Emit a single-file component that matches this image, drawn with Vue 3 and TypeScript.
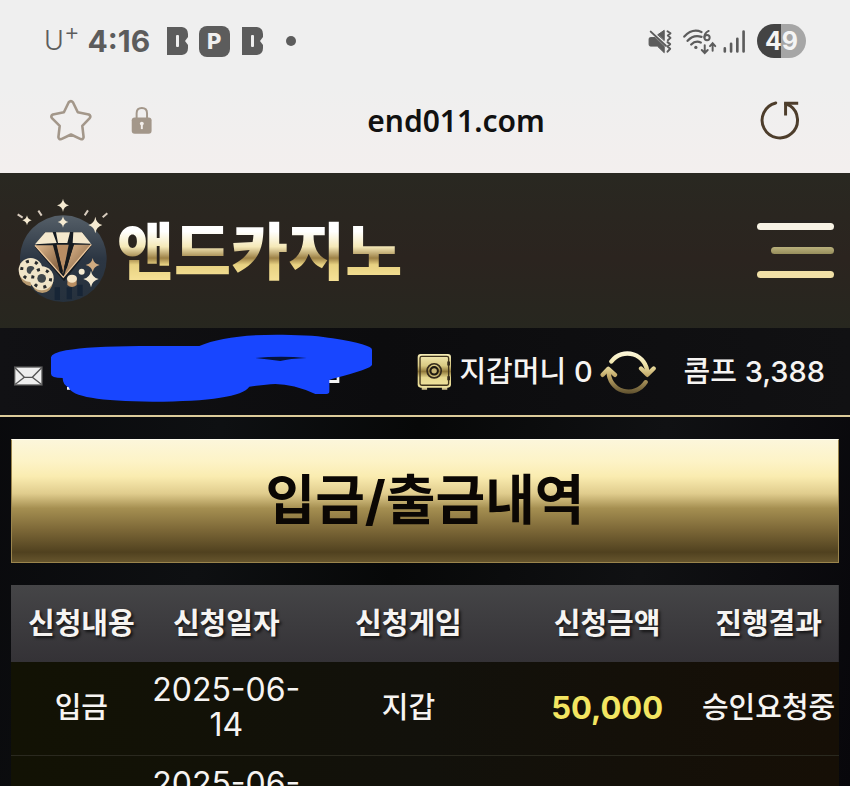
<script setup lang="ts">
interface HistoryRow {
  kind: string
  date: string
  game: string
  amount: string
  result: string
}

const columns: string[] = ['신청내용', '신청일자', '신청게임', '신청금액', '진행결과']

const rows: HistoryRow[] = [
  { kind: '입금', date: '2025-06-14', game: '지갑', amount: '50,000', result: '승인요청중' },
  { kind: '', date: '2025-06-', game: '', amount: '', result: '' },
]
</script>

<template>
  <div class="screen">
    <div class="browser">
      <div class="status">
        <div class="status-left">
          <span class="carrier">U<sup>+</sup></span>
          <span class="clock">4:16</span>
          <svg class="notes" viewBox="0 0 134 34" aria-hidden="true">
            <g fill="#5c5c5c">
              <path d="M1 3H16Q22 4 22 10V13L19 17L22 21V24Q22 30 16 31H1Z" />
              <rect x="33" y="2" width="31" height="31" rx="8" />
              <path d="M76 3H91Q97 4 97 10V13L94 17L97 21V24Q97 30 91 31H76Z" />
              <circle cx="125" cy="17" r="5" />
            </g>
            <rect x="10" y="11" width="3" height="12" rx="1" fill="#efefef" />
            <rect x="85" y="11" width="3" height="12" rx="1" fill="#efefef" />
            <text class="badge-p" x="41" y="25">P</text>
          </svg>
        </div>
        <div class="status-right">
          <svg class="signals" viewBox="50 50 302 82" fill="none" stroke="#5c5c5c" stroke-width="7" stroke-linecap="round" aria-hidden="true">
            <path d="M57 83q0-4 4-4h14l28 27v19l-21-20H61q-4 0-4-4zM84 70l19-13v30z" fill="#5c5c5c" stroke="#5c5c5c" stroke-width="3" />
            <path d="M62 61l46 43" stroke-width="6" />
            <path d="M113 60l9 6-8 7 8 7-8 7M113 93l8 6-8 7 8 7-8 9" stroke-width="6" stroke-linejoin="round" />
            <path d="M164 76q24-26 52-14M174 89q18-20 42-12M185 100q13-13 29-6" stroke-width="7" />
            <circle cx="199" cy="109" r="5" fill="#5c5c5c" stroke="none" />
            <path d="M238 59q-14 7-13 20" stroke-width="6" />
            <circle cx="233" cy="79" r="8" stroke-width="6" />
            <path d="M226 102v23m-9-8l9 9 9-9M250 119V97m-8 8l8-9 8 9" stroke-width="6" />
            <path d="M287 112v9M306 98v23M325 83v38M344 61v60" stroke-width="8" />
          </svg>
          <span class="battery">49</span>
        </div>
      </div>

      <div class="address">
        <button class="icon-button" type="button" aria-label="즐겨찾기">
          <svg class="star" viewBox="58 264 130 130" aria-hidden="true">
            <path d="M116 274q7-7 13 0l15 31 34 7q8 4 3 11l-23 24 4 35q-1 8-9 6l-30-14-30 14q-8 2-9-6l4-35-24-24q-5-7 3-11l34-7z" fill="none" stroke="#a3978a" stroke-width="8" stroke-linejoin="round" />
          </svg>
        </button>
        <svg class="lock" viewBox="303 286 64 86" aria-hidden="true">
          <path d="M320 324v-16q0-16 16-16t16 16v16" fill="none" stroke="#a3978a" stroke-width="6" />
          <rect x="305" y="321" width="61" height="50" rx="9" fill="#a3978a" />
          <path d="M336 341v16" stroke="#f3efec" stroke-width="6" />
          <circle cx="336" cy="340" r="6" fill="#f3efec" />
        </svg>
        <span class="url">end011.com</span>
        <button class="icon-button" type="button" aria-label="새로고침">
          <svg class="reload" viewBox="388 268 122 122" fill="none" stroke="#4d3d2b" stroke-width="9" stroke-linecap="round" aria-hidden="true">
            <path d="M436 277A54 54 0 1 0 479 285L466 280" />
            <path d="M466 311V278h34" stroke-linecap="square" />
          </svg>
        </button>
      </div>
    </div>

    <header class="brand">
      <a class="logo" href="#">
        <svg class="emblem" viewBox="48 50 282 318" aria-hidden="true">
          <defs>
            <linearGradient id="disc" x1="0" y1="0" x2="0" y2="1">
              <stop offset="0" stop-color="#555f68" />
              <stop offset="0.5" stop-color="#2c3643" />
              <stop offset="1" stop-color="#26313d" />
            </linearGradient>
            <linearGradient id="facet" x1="0" y1="0" x2="1" y2="1">
              <stop offset="0" stop-color="#e0b98e" />
              <stop offset="1" stop-color="#7a5738" />
            </linearGradient>
          </defs>
          <circle cx="190" cy="232" r="130" fill="url(#disc)" />
          <path d="M172 318v38M208 318v36M240 310v34" stroke="#172536" stroke-width="16" />
          <path d="M105 198l30-46h112l27 42-82 106z" fill="#151b22" />
          <path d="M105 189l31-36h22l12 32zM168 153h42l-8 32h-28zM220 153h26l27 34-55-2z" fill="#f4e8cd" />
          <path d="M105 192l58 0 17 82z" fill="url(#facet)" />
          <path d="M170 190h36l-17 88z" fill="#b98d64" />
          <path d="M222 190h50l-80 94z" fill="url(#facet)" />
          <path d="M163 190l22 82M216 190l-20 70" stroke="#17191c" stroke-width="9" />
          <path d="M105 192l85 96 84-99" fill="none" stroke="#f0c99c" stroke-width="4" />
          <g fill="#f5ead1">
            <path d="M189 52q2 16 18 20-16 4-18 20-2-16-18-20 16-4 18-20z" />
            <path d="M81 102q2 12 14 15-12 3-14 15-2-12-14-15 12-3 14-15z" />
            <path d="M189 105q2 14 16 17-14 3-16 17-2-14-16-17 14-3 16-17z" />
            <path d="M286 106q3 20 21 25-18 5-21 25-3-20-21-25 18-5 21-25z" />
            <path d="M273 268q3 20 23 25-20 5-23 25-3-20-23-25 20-5 23-25z" />
            <circle cx="245" cy="271" r="9" />
          </g>
          <path d="M278 230q3 17 21 21-18 4-21 21-3-17-21-21 18-4 21-21z" fill="#d1ab80" />
          <path d="M202 294v17q14 12 28 0v-17z" fill="#b98e62" />
          <ellipse cx="216" cy="292" rx="15" ry="12" fill="#f5e4c5" />
          <path d="M53 99l15 10M115 88l10 15M264 87l-10 15M322 96l-14 12" stroke="#d7cbbd" stroke-width="6" />
          <g>
            <path d="M57 272q4 36 35 43l20-30zM92 300q8 35 35 35t33-35z" fill="#b89a70" />
            <circle cx="92" cy="266" r="36" fill="#f0e4c8" />
            <circle cx="92" cy="266" r="27" fill="none" stroke="#272a2c" stroke-width="9" stroke-dasharray="9 19" />
            <circle cx="92" cy="266" r="12" fill="#40474b" />
            <circle cx="125" cy="291" r="36" fill="#f0e4c8" />
            <circle cx="125" cy="291" r="27" fill="none" stroke="#272a2c" stroke-width="9" stroke-dasharray="9 19" />
            <circle cx="125" cy="291" r="13" fill="#40474b" />
          </g>
        </svg>
        <span class="logo-text">앤드카지노</span>
      </a>
      <button class="menu" type="button" aria-label="메뉴">
        <span></span><span></span><span></span>
      </button>
    </header>

    <section class="account">
      <svg class="member" viewBox="44 25 1080 210" aria-hidden="true">
        <rect x="46" y="127" width="82" height="54" fill="#eee" stroke="#555" stroke-width="4" />
        <path d="M47 129l28 29h24l28-29M48 179l28-22M126 179l-28-22" fill="none" stroke="#555" stroke-width="4" />
        <path d="M203 186h9v9h-9zM985 166h27v-11h8v20h-35z" fill="#f5f5f5" />
        <path d="M155 98Q156 86 200 77Q270 65 420 64H600Q680 28 850 30Q950 31 1000 41Q1118 60 1118 75V120Q1118 132 1000 162L990 166V200Q990 208 981 208H948Q865 170 800 180L750 186Q720 230 460 231Q220 230 208 188Q190 180 190 160Q155 160 155 147Z" fill="#1846ff" />
        <path d="M768 100Q845 92 922 100Q870 102 843 109Q810 104 768 100Z" fill="#06143a" />
      </svg>
      <div class="balances">
        <svg class="safe" viewBox="46 85 104 110" aria-hidden="true">
          <defs>
            <linearGradient id="safe-gold" x1="0" y1="0" x2="0" y2="1">
              <stop offset="0" stop-color="#f6edb6" />
              <stop offset="0.35" stop-color="#d8c983" />
              <stop offset="0.52" stop-color="#917a3b" />
              <stop offset="0.7" stop-color="#e7d990" />
              <stop offset="1" stop-color="#efe39f" />
            </linearGradient>
          </defs>
          <path d="M60 186h16v8H60zM120 186h16v8h-16z" fill="#cfc28e" />
          <rect x="48" y="88" width="99" height="100" rx="9" fill="url(#safe-gold)" />
          <rect x="55" y="95" width="85" height="86" rx="5" fill="none" stroke="#40341c" stroke-width="4" />
          <circle cx="97" cy="138" r="21" fill="none" stroke="#33291b" stroke-width="5" />
          <circle cx="97" cy="138" r="11" fill="#c7b574" stroke="#1d1811" stroke-width="6" />
          <path d="M140 110v12M140 154v12" stroke="#33291b" stroke-width="8" />
        </svg>
        <span class="wallet">지갑머니 0</span>
        <button class="icon-button" type="button" aria-label="잔액 갱신">
          <svg class="cycle" viewBox="588 70 168 140" fill="none" stroke="url(#cycle-gold)" stroke-width="13" stroke-linecap="round" stroke-linejoin="round" aria-hidden="true">
            <defs>
              <linearGradient id="cycle-gold" gradientUnits="userSpaceOnUse" x1="0" y1="75" x2="0" y2="205">
                <stop offset="0" stop-color="#fffbe4" />
                <stop offset="0.35" stop-color="#eee2a6" />
                <stop offset="0.6" stop-color="#c2a969" />
                <stop offset="1" stop-color="#625330" />
              </linearGradient>
            </defs>
            <path d="M622 110A60 60 0 0 1 730 146M725 172A60 60 0 0 1 614 138" />
            <path d="M711 131l19 19 19-19M596 150l17-18 20 18" />
          </svg>
        </button>
        <span class="comp">콤프 3,388</span>
      </div>
    </section>

    <main class="content">
      <h1 class="title">입금/출금내역</h1>
      <table class="history">
        <colgroup>
          <col class="c-kind" /><col class="c-date" /><col class="c-game" /><col class="c-amount" /><col class="c-result" />
        </colgroup>
        <thead>
          <tr>
            <th v-for="column in columns" :key="column" scope="col">{{ column }}</th>
          </tr>
        </thead>
        <tbody>
          <tr v-for="row in rows" :key="row.date">
            <td>{{ row.kind }}</td>
            <td class="date">{{ row.date }}</td>
            <td>{{ row.game }}</td>
            <td class="amount">{{ row.amount }}</td>
            <td>{{ row.result }}</td>
          </tr>
        </tbody>
      </table>
    </main>
  </div>
</template>

<style>
body {
  margin: 0;
  background: #08080a;
}
</style>

<style scoped>
.screen {
  height: 100vh;
  overflow: hidden;
  font-family: Inter, "Noto Sans CJK KR", sans-serif;
  color: #f6f4f2;
  background: linear-gradient(100deg, #08080b 0%, #0e1012 30%, #070808 50%, #101113 75%, #08070b 100%);
}

.browser {
  padding-bottom: 15px;
  background: linear-gradient(#efefef 50%, #f3efee);
}

.status {
  display: flex;
  align-items: center;
  justify-content: space-between;
  height: 82px;
  padding: 0 44px;
  color: #5c5c5c;
}

.status-left,
.status-right {
  display: flex;
  align-items: center;
}

.carrier {
  font-size: 27px;
  font-weight: 300;
  line-height: 32px;
}

.carrier sup {
  font-size: 24px;
  line-height: 0;
}

.clock {
  margin: 0 16px 0 8px;
  font-size: 30px;
  font-weight: 700;
}

.notes {
  width: 134px;
  height: 34px;
}

.badge-p {
  font-size: 22px;
  font-weight: 800;
  fill: #efefef;
}

.status-right {
  gap: 10px;
}

.signals {
  width: 101px;
  height: 27px;
}

.battery {
  width: 49px;
  border-radius: 17px;
  background: linear-gradient(90deg, #444 50%, #a6a6a6 50%);
  color: #f4f4f4;
  font-size: 25px;
  font-weight: 700;
  line-height: 34px;
  text-align: center;
}

.address {
  display: flex;
  align-items: center;
  height: 76px;
  padding: 0 50px;
}

.icon-button {
  display: flex;
  padding: 0;
  border: 0;
  background: none;
}

.star {
  width: 42px;
  height: 42px;
}

.lock {
  width: 21px;
  height: 28px;
  margin-left: 39px;
}

.url {
  flex: 1;
  color: #111;
  font-family: "Noto Sans", sans-serif;
  font-size: 30px;
  font-weight: 600;
  text-align: center;
}

.reload {
  width: 40px;
  height: 40px;
}

.brand {
  display: flex;
  align-items: center;
  justify-content: space-between;
  height: 155px;
  padding: 0 16px;
  background: linear-gradient(#292821, #2b241f 55%, #27271f);
}

.logo {
  display: flex;
  align-items: center;
  gap: 7px;
  text-decoration: none;
}

.emblem {
  width: 94px;
  height: 106px;
}

.logo-text {
  padding-top: 5px;
  background: linear-gradient(#fff 30%, #f5e9b8 46%, #9d8146 58%, #e8d282 65%, #f4df94 80%);
  background-clip: text;
  color: transparent;
  font-size: 62px;
  font-weight: 900;
  line-height: 90px;
}

.menu {
  display: flex;
  flex-direction: column;
  align-items: flex-end;
  gap: 17px;
  width: 77px;
  padding: 0;
  border: 0;
  background: none;
}

.menu span {
  width: 77px;
  height: 7px;
  border-radius: 4px;
  background: #f8f3e5;
}

.menu span:nth-child(2) {
  width: 63px;
  background: linear-gradient(#b9b07c, #968d5b);
}

.menu span:nth-child(3) {
  background: #f1e0a6;
}

.account {
  display: flex;
  align-items: center;
  justify-content: space-between;
  height: 87px;
  padding: 0 25px 0 14px;
  border-bottom: 2px solid #dccb9a;
  background: linear-gradient(90deg, #111114, #0c0c0e 45%, #111113);
}

.member {
  width: 360px;
  height: 70px;
  margin-bottom: 8px;
}

.balances {
  display: flex;
  align-items: center;
  font-size: 29px;
  font-weight: 500;
  line-height: 36px;
  white-space: nowrap;
}

.safe {
  width: 35px;
  height: 37px;
}

.wallet {
  margin: 0 7px;
}

.cycle {
  width: 56px;
  height: 47px;
}

.comp {
  margin-left: 28px;
}

.content {
  padding: 22px 11px 0;
}

.title {
  margin: 0;
  padding: 21px 0;
  border: 1px solid #9b854d;
  border-top-color: #fffdf0;
  background: linear-gradient(#fcf6db, #fdf3c6 18%, #faecb0 30%, #e0cc8d 44%, #a58f51 56%, #7e6938 73%, #50411f 92%, #66552d);
  color: #0b0704;
  font-size: 54px;
  font-weight: 700;
  line-height: 80px;
  text-align: center;
}

.history {
  width: 100%;
  margin-top: 22px;
  border-collapse: collapse;
  table-layout: fixed;
  font-size: 29px;
  font-weight: 500;
  line-height: 35px;
  text-align: center;
}

.c-kind {
  width: 17%;
}

.c-date {
  width: 18%;
}

.c-game {
  width: 26%;
}

.c-amount {
  width: 22%;
}

.c-result {
  width: 17%;
}

.history thead tr {
  background: linear-gradient(#454547, #343236);
}

.history th {
  padding: 21px 0;
  font-weight: 700;
  text-shadow: 2px 2px 3px #000000b0;
}

.history tbody tr {
  border-bottom: 1px solid #2a291f;
  background: linear-gradient(90deg, #121204, #12110b 50%, #160f06);
}

.history td {
  padding: 10px 0 13px;
  white-space: nowrap;
}

.history .date {
  font-size: 32px;
  font-weight: 400;
  white-space: normal;
}

.history .amount {
  color: #f3e561;
  font-size: 31px;
  font-weight: 700;
}
</style>
